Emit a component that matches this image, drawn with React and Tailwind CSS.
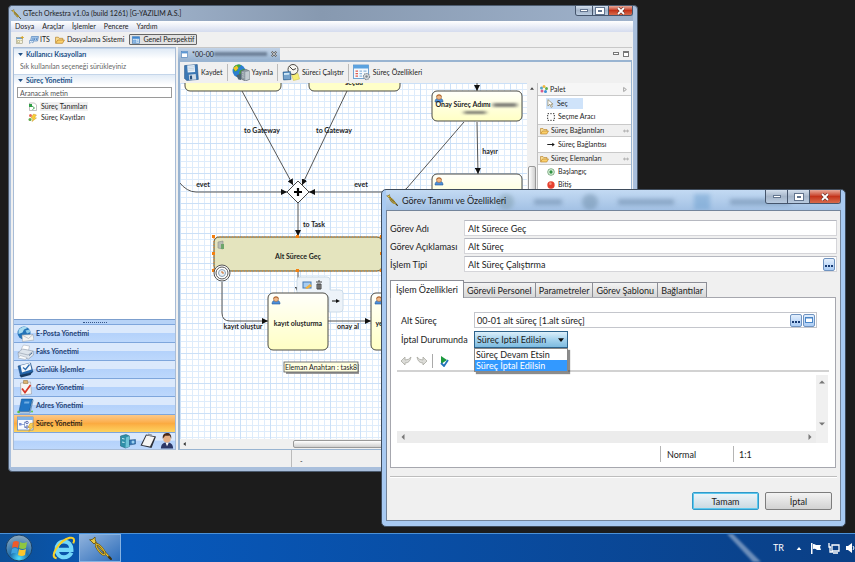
import React, { useState } from "react";
import clsx from "clsx";

/* ---------- small icons ---------- */

function TrumpetIcon({ className }) {
  return (
    <svg viewBox="0 0 24 24" className={className} fill="none" strokeLinecap="round">
      <path d="M5 4l17 18" stroke="#4f3f0c" strokeWidth="2.200" />
      <path d="M5 4l16 17" stroke="#e3c23c" strokeWidth="1.200" />
      <ellipse cx="12.500" cy="13.500" rx="6.500" ry="2" transform="rotate(50 12.5 13.5)" stroke="#5d4a0d" strokeWidth="2" />
      <ellipse cx="12.500" cy="13.500" rx="6.500" ry="2" transform="rotate(50 12.5 13.5)" stroke="#dcb932" strokeWidth="1.200" />
      <path d="M2 4q3 0 5-3 0 3 1 5l-2 2Q4 6 2 4z" fill="#e6c846" stroke="#5d4a0d" strokeWidth=".8" />
      <path d="M21 21l2 2" stroke="#3d3210" strokeWidth="2" />
    </svg>
  );
}

function WindowIcon({ className }) {
  return (
    <svg viewBox="0 0 16 16" className={className}>
      <rect x="1" y="1.5" width="14" height="13" fill="#fff" stroke="#4f81b8" strokeWidth="1.5" />
      <rect x="1" y="1.5" width="14" height="4" fill="#5c98d6" />
    </svg>
  );
}

function PerspectiveIcon({ className }) {
  return (
    <svg viewBox="0 0 16 16" className={className}>
      <rect x="1" y="1.5" width="14" height="13" fill="#d5e7f8" stroke="#4f81b8" strokeWidth="1.5" />
      <rect x="1" y="1.5" width="14" height="4" fill="#3f86d0" />
      <path d="M3 8h5v5H3zM10 8h3M10 11h3" fill="#8cb8e4" stroke="#5c98d6" />
    </svg>
  );
}

function NewWindowIcon({ className }) {
  return (
    <svg viewBox="0 0 16 16" className={className}>
      <rect x="1" y="3" width="12" height="12" fill="#f4f1dc" stroke="#8b8a6a" />
      <rect x="1" y="3" width="12" height="3" fill="#6fa0d5" />
      <path d="M3 9h4v4H3zM9 9h3" stroke="#a39a5f" fill="none" />
      <path d="M12.500 0v6M9.500 3h6" stroke="#d7a526" strokeWidth="2" />
    </svg>
  );
}

function ItsIcon({ className }) {
  return (
    <svg viewBox="0 0 20 16" className={className}>
      <path d="M5 1h14l-2 9H3z" fill="#b9d6f3" stroke="#3e74b2" strokeWidth="1.2" />
      <path d="M8 3v5M12 3l-1 5M16 3l-1 5" stroke="#2a62a8" strokeWidth="1.4" />
      <path d="M1 9h8l-1 5-3-2-4 3z" fill="#e8f2fc" stroke="#3e74b2" />
    </svg>
  );
}

function FolderIcon({ className }) {
  return (
    <svg viewBox="0 0 18 14" className={className}>
      <path d="M1 12V2h5l1.500 2H14v3" fill="#f8dc93" stroke="#b47b1e" strokeWidth="1.200" />
      <path d="M1 13l4-6h12l-3.500 6z" fill="#fbd06c" stroke="#b47b1e" strokeWidth="1.200" />
    </svg>
  );
}

function SaveIcon({ className }) {
  return (
    <svg viewBox="0 0 28 32" className={className}>
      <path d="M1 3l24-2 2 28-22 2-4-4z" fill="#3c78b4" stroke="#1f4d80" />
      <path d="M6 3l14-1 1 13-14 1z" fill="#e9f1f8" />
      <path d="M8 6l11-1M8 9l11-1M8 12l11-1" stroke="#a9bccf" />
      <path d="M9 20l13-1 1 10-13 1z" fill="#cfdae5" />
      <path d="M11 22l4-.5.5 7-4 .5z" fill="#27517f" />
    </svg>
  );
}

function PublishIcon({ className }) {
  return (
    <svg viewBox="0 0 34 32" className={className}>
      <circle cx="13" cy="13" r="12" fill="#2c7fd0" />
      <path d="M3 6c4-6 12-6 14-3l-5 4-2 6-6 1zM15 12l8-3 1 6-7 8-4-5z" fill="#45a93b" />
      <path d="M2 8l7-5 3 5-5 5z" fill="#f2c327" />
      <path d="M17 13l9-3 7 3v16l-8 3-8-4z" fill="#8e9aa3" stroke="#4e5960" />
      <path d="M25 15v16l8-3V13z" fill="#c3ccd2" />
      <path d="M8 21l9-3v12l-5-1z" fill="#4b6472" />
      <path d="M19 16l4 1M19 20l4 1M19 24l4 1" stroke="#e3e9ed" />
    </svg>
  );
}

function RunIcon({ className }) {
  return (
    <svg viewBox="0 0 36 34" className={className}>
      <path d="M19 21l13-2 3 11-12 3z" fill="#f6ee76" stroke="#cbbf46" />
      <circle cx="22" cy="11" r="10" fill="#f7f6f1" stroke="#4e4a45" strokeWidth="2" />
      <path d="M15 5l7 7 6-3" stroke="#2c2a28" strokeWidth="1.800" fill="none" />
      <path d="M2 16l15-1 1 16-15 1z" fill="#4a85bb" stroke="#234f7b" />
      <path d="M4 18l11-.7v4L4 22z" fill="#cfe6f5" />
      <path d="M5 24h2m2 0h2m2 0h2M5 28h2m2 0h2m2 0h2" stroke="#fff" strokeWidth="2" />
    </svg>
  );
}

function PropertiesIcon({ className }) {
  return (
    <svg viewBox="0 0 36 34" className={className}>
      <rect x="1" y="2" width="30" height="27" fill="#f5fafe" stroke="#4888c5" strokeWidth="1.500" />
      <rect x="1" y="2" width="30" height="7" fill="#5ba2df" />
      <path d="M5 14h5M5 19h5M5 24h5" stroke="#e0584b" strokeWidth="2.500" />
      <path d="M13 14h5M13 19h5M13 24h5M21 14h6" stroke="#8db6dc" strokeWidth="2.500" />
      <circle cx="27" cy="25" r="6" fill="#dfe3e7" stroke="#7e8890" strokeWidth="2.500" strokeDasharray="3 1.500" />
      <circle cx="27" cy="25" r="2.500" fill="#7e8890" />
    </svg>
  );
}

function ProcessDefIcon({ className }) {
  return (
    <svg viewBox="0 0 18 18" className={className}>
      <path d="M3 2h10l4 4v11H3z" fill="#fff" stroke="#858585" />
      <path d="M2 4h6v6H2z" fill="#2f9e45" />
      <path d="M8 8l5 4-4 3" stroke="#2f9e45" strokeWidth="1.800" fill="none" />
    </svg>
  );
}

function ProcessLogIcon({ className }) {
  return (
    <svg viewBox="0 0 18 18" className={className}>
      <circle cx="5" cy="5" r="3" fill="#e66a58" />
      <path d="M11 2l6 2-4 5 4 1-9 7 2-6-4-1z" fill="#f9cf35" stroke="#c68a18" strokeWidth=".8" />
      <circle cx="4" cy="13" r="3" fill="#62a84a" />
    </svg>
  );
}

function MailIcon({ className }) {
  return (
    <svg viewBox="0 0 34 32" className={className}>
      <circle cx="14" cy="14" r="13" fill="#2373b8" />
      <path d="M3 9C7 0 18 0 21 4l-7 3-3 6-8 3z" fill="#a9dcf0" />
      <path d="M17 9l8-2 2 5-7 3z" fill="#8fcbe9" />
      <path d="M10 18l22-1 2 11-23 3z" fill="#f4f4f2" stroke="#909aa4" />
      <path d="M10 18l13 7 9-8" fill="none" stroke="#909aa4" />
    </svg>
  );
}

function FaxIcon({ className }) {
  return (
    <svg viewBox="0 0 34 32" className={className}>
      <path d="M8 11L13 2l12 2-2 9z" fill="#fff" stroke="#9aa3ae" />
      <path d="M2 17l9-7 21 4 1 8-10 8-20-5z" fill="#dde4ec" stroke="#7f8b9a" />
      <path d="M2 17l20 5 11-8" fill="none" stroke="#7f8b9a" />
      <path d="M6 23l14 4-3 4-15-3z" fill="#f9fbfd" stroke="#9aa3ae" />
      <path d="M24 23l6-5" stroke="#4f6f95" strokeWidth="2" />
    </svg>
  );
}

function DailyIcon({ className }) {
  return (
    <svg viewBox="0 0 34 32" className={className}>
      <path d="M2 8l25-6 5 18-25 8z" fill="#2566ab" stroke="#163f70" />
      <path d="M7 7l19-5 3 13-19 6z" fill="#f4f8fc" />
      <path d="M12 11l5 4 8-10" fill="none" stroke="#2c6bb0" strokeWidth="2.500" />
      <path d="M5 26l20-4 6-3-4 7-19 5z" fill="#173b63" />
    </svg>
  );
}

function TaskIcon({ className }) {
  return (
    <svg viewBox="0 0 34 32" className={className}>
      <path d="M7 6l20-2 2 24-21 2z" fill="#f7f6f4" stroke="#8d8d90" />
      <path d="M13 1h8l1 6h-9z" fill="#dcb370" stroke="#8f6a32" />
      <path d="M10 17l6 8 11-15" fill="none" stroke="#d8382a" strokeWidth="3.500" />
    </svg>
  );
}

function AddressIcon({ className }) {
  return (
    <svg viewBox="0 0 34 32" className={className}>
      <path d="M9 2h22l-6 25H4z" fill="#2176c5" stroke="#134c87" />
      <path d="M4 27l21 0 6-25 1 3-6 25-21 0z" fill="#e7f0f8" stroke="#134c87" />
      <path d="M15 7h10l-1 4H14z" fill="#71aee3" />
      <circle cx="3" cy="28" r="2.500" fill="#61c43f" />
      <circle cx="30" cy="27" r="2" fill="#61c43f" />
    </svg>
  );
}

function ProcessIcon({ className }) {
  return (
    <svg viewBox="0 0 34 32" className={className}>
      <rect x="1" y="2" width="31" height="26" fill="#f7faff" stroke="#5a87bd" strokeWidth="1.500" />
      <rect x="1" y="2" width="31" height="6" fill="#7fb1e4" />
      <path d="M8 17h7M15 12v11h4M15 12h4" stroke="#3a5fa9" fill="none" />
      <rect x="4" y="14" width="5" height="5" fill="#7a8fd8" />
      <circle cx="20" cy="13" r="2.500" fill="none" stroke="#33479a" strokeWidth="1.500" />
      <circle cx="20" cy="22" r="2.500" fill="none" stroke="#33479a" strokeWidth="1.500" />
      <path d="M26 15l7-1-3 6 3 1-9 10 2-8-4 0z" fill="#f9d257" stroke="#c58c1f" />
    </svg>
  );
}

function CabinetIcon({ className }) {
  return (
    <svg viewBox="0 0 34 32" className={className}>
      <path d="M2 6l11-3 7 3v21l-8 3-10-4z" fill="#2f8fa8" stroke="#17586b" />
      <path d="M13 9l7-3v21l-8 3z" fill="#6fc3d6" />
      <path d="M5 11l5 1M5 18l5 1" stroke="#c7edf5" strokeWidth="2" />
      <path d="M20 14l12-1v9l-12 2z" fill="#3577b5" stroke="#1e4c7c" />
      <circle cx="27" cy="18" r="3" fill="#9cd0ef" />
    </svg>
  );
}

function NotebookIcon({ className }) {
  return (
    <svg viewBox="0 0 34 32" className={className}>
      <path d="M13 3l20 4-9 23L2 25z" fill="#2b2f38" />
      <path d="M14 5l16 3-9 19L5 24z" fill="#f5f5f3" />
      <path d="M17 1l8 2-1 4-8-2z" fill="#8e949c" />
    </svg>
  );
}

function PersonIcon({ className }) {
  return (
    <svg viewBox="0 0 30 34" className={className}>
      <path d="M2 33c0-9 5-13 13-13s13 4 13 13z" fill="#2b3868" />
      <path d="M12 20l3 8 4-8z" fill="#fff" />
      <circle cx="15" cy="12" r="8" fill="#e4ae83" />
      <path d="M6 12C5 2 11 0 16 0s9 4 8 12l-3-6-10 0z" fill="#4c2a18" />
    </svg>
  );
}

function UserGlyph({ x, y }) {
  return (
    <g transform={`translate(${x} ${y})`}>
      <path d="M0 8c0-3 2-4 4-4s4 1 4 4z" fill="#4d8fda" stroke="#1f5596" strokeWidth=".6" />
      <circle cx="4" cy="3" r="2.500" fill="#f0b98a" stroke="#9b5a27" strokeWidth=".5" />
      <path d="M1.500 3C1 0 7 0 6.500 3L5 1.500H3z" fill="#a5541d" />
    </g>
  );
}

/* ---------- window chrome ---------- */

function CaptionButtons({ large }) {
  return (
    <div
      className={clsx(
        "flex shrink-0 self-start rounded-b-[3px] border border-t-0 border-slate-600 overflow-hidden",
        large ? "h-3.5 w-19" : "h-2.5 w-[58px]"
      )}
    >
      <button aria-label="Simge durumuna küçült" className="flex w-5 grow items-center justify-center border-r border-slate-600 bg-linear-to-b from-[#d3dfed] via-[#a5b5c9] to-[#b9cbe0]">
        <span className="h-[3px] w-2 border border-slate-500 bg-white" />
      </button>
      <button aria-label="Ekranı kapla" className="flex w-5 grow items-center justify-center border-r border-slate-600 bg-linear-to-b from-[#d3dfed] via-[#a5b5c9] to-[#b9cbe0]">
        <span className="h-1.5 w-2 border-2 border-white bg-slate-500 outline outline-slate-500" />
      </button>
      <button aria-label="Kapat" className="flex w-7 grow items-center justify-center bg-linear-to-b from-[#e6a99b] via-[#c4331a] to-[#d8694a]">
        <svg viewBox="0 0 10 8" className="h-2 w-2.5">
          <path d="M2 1l6 6M8 1L2 7" stroke="#5b2b27" strokeWidth="3" />
          <path d="M2 1l6 6M8 1L2 7" stroke="#fff" strokeWidth="1.800" />
        </svg>
      </button>
    </div>
  );
}

/* ---------- left side ---------- */

const NAV_ITEMS = [
  { label: "E-Posta Yönetimi", icon: MailIcon },
  { label: "Faks Yönetimi", icon: FaxIcon },
  { label: "Günlük İşlemler", icon: DailyIcon },
  { label: "Görev Yönetimi", icon: TaskIcon },
  { label: "Adres Yönetimi", icon: AddressIcon },
  { label: "Süreç Yönetimi", icon: ProcessIcon },
];

function SectionHeader({ children }) {
  return (
    <h2 className="flex h-[11px] items-center gap-[3px] border-t border-[#c5d6ea] bg-linear-to-b from-[#e1ebf6] to-white px-1 font-bold text-[#215086]">
      <svg viewBox="0 0 8 5" className="h-[3px] w-[5px]">
        <path d="M0 0h8L4 5z" fill="#215086" />
      </svg>
      {children}
    </h2>
  );
}

function Sidebar() {
  const [active, setActive] = useState("Süreç Yönetimi");

  return (
    <aside className="flex w-[163px] shrink-0 flex-col border border-[#a8bcd6] bg-white">
      <SectionHeader>Kullanıcı Kısayolları</SectionHeader>
      <p className="flex h-[15px] items-center px-1.5 text-[#666]">Sık kullanılan seçeneği sürükleyiniz</p>
      <SectionHeader>Süreç Yönetimi</SectionHeader>
      <div className="px-[3px] pt-0.5">
        <input
          aria-label="Aranacak metin"
          placeholder="Aranacak metin"
          className="block h-[11px] w-full border border-[#9a9a9a] px-0.5 placeholder:text-[#555] outline-none"
        />
      </div>
      <ul className="px-3.5 pt-[3px]">
        <li className="flex h-[11px] items-center gap-[3px]">
          <ProcessDefIcon className="size-[9px]" />
          <span className="bg-[#f0f0f0] px-px py-px">Süreç Tanımları</span>
        </li>
        <li className="flex h-[11px] items-center gap-[3px]">
          <ProcessLogIcon className="size-[9px]" />
          <span className="px-px">Süreç Kayıtları</span>
        </li>
      </ul>

      <nav className="mt-auto">
        <div className="flex h-[5px] items-center justify-center border-t border-[#7c9fce] bg-[#b7d3f7]">
          <span className="w-6 border-t border-dotted border-[#35568a]" />
        </div>
        {NAV_ITEMS.map(({ label, icon: Icon }) => (
          <button
            key={label}
            onClick={() => setActive(label)}
            className={clsx(
              "flex h-[18px] w-full items-center gap-0.5 border-t border-[#7ea6dc] bg-linear-to-b px-[3px] text-left font-bold",
              active === label
                ? "from-[#fdc987] via-[#fbab41] to-[#fdd35f] text-[#2b2416]"
                : "from-[#dbe9fc] from-45% via-[#b4d2fb] via-50% to-[#bdd8fc] text-[#1f4175]"
            )}
          >
            <Icon className="h-4 w-[17px] shrink-0" />
            {label}
          </button>
        ))}
        <div className="flex h-[17px] items-center justify-end gap-0.5 border-t border-[#7ea6dc] bg-linear-to-b from-[#dbe9fc] from-45% via-[#b4d2fb] via-50% to-[#bdd8fc]">
          <CabinetIcon className="h-4 w-[18px]" />
          <NotebookIcon className="h-4 w-[18px]" />
          <PersonIcon className="h-4 w-4" />
        </div>
      </nav>
    </aside>
  );
}

/* ---------- process diagram ---------- */

function Node({ x, y, w, h, fill = "url(#nodeFill)" }) {
  return <rect x={x} y={y} width={w} height={h} rx="5" fill={fill} stroke="#4a4a44" />;
}

function Diagram() {
  return (
    <svg className="block h-full w-full" role="img" aria-label="Süreç diyagramı">
      <defs>
        <pattern id="grid" width="6" height="6" patternUnits="userSpaceOnUse">
          <path d="M.5 0v6M0 .5h6" stroke="#deecfb" fill="none" />
        </pattern>
        <pattern id="gridBold" width="30" height="30" patternUnits="userSpaceOnUse">
          <path d="M.5 0v30M0 .5h30" stroke="#cbe0f7" fill="none" />
        </pattern>
        <linearGradient id="nodeFill" x1="0" y1="0" x2="0" y2="1">
          <stop offset="0" stopColor="#fffffb" />
          <stop offset="1" stopColor="#ffffc4" />
        </linearGradient>
        <marker id="arrow" markerUnits="userSpaceOnUse" markerWidth="8" markerHeight="6" refX="6" refY="3" orient="auto">
          <path d="M0 0l6 3-6 3z" fill="#111" />
        </marker>
        <filter id="smudge" x="-50%" y="-50%" width="200%" height="200%">
          <feGaussianBlur stdDeviation="2 1" />
        </filter>
      </defs>
      <rect width="100%" height="100%" fill="#fff" />
      <rect width="100%" height="100%" fill="url(#grid)" />
      <rect width="100%" height="100%" fill="url(#gridBold)" />

      <g transform="translate(-180 -83)">
        {/* connections */}
        <g fill="none" stroke="#555">
          <path d="M242 91L293 185" markerEnd="url(#arrow)" />
          <path d="M347 91L302 185" markerEnd="url(#arrow)" />
          <path d="M179 182q8 10 17 10H287" markerEnd="url(#arrow)" />
          <path d="M464 122L407 188q-3 4-8 4H309" markerEnd="url(#arrow)" />
          <path d="M298 203V236" markerEnd="url(#arrow)" />
          <path d="M477 80V91" markerEnd="url(#arrow)" />
          <path d="M477 122L478 174" markerEnd="url(#arrow)" />
          <path d="M298 270V293" markerEnd="url(#arrow)" />
          <path d="M222 282V313q0 8 8 8H268" markerEnd="url(#arrow)" />
          <path d="M328 321H371" markerEnd="url(#arrow)" />
        </g>

        <Node x="185" y="60" w="96" h="31" fill="#ffffc8" />
        <Node x="309" y="60" w="91" h="31" fill="#ffffc8" />
        <Node x="432" y="91" w="90" h="30" />
        <Node x="432" y="174" w="90" h="34" />
        <Node x="371" y="293" w="60" h="57" />

        <path d="M298 181l11 11-11 11-11-11z" fill="#fff" stroke="#444" />
        <path d="M298 188v8M294 192h8" stroke="#000" strokeWidth="2.200" />

        {/* selected sub process */}
        <rect x="214" y="237" width="168" height="34" rx="5" fill="#e4e4be" stroke="#4a4a30" />
        <rect x="214" y="237" width="168" height="34" fill="none" stroke="#f08a24" strokeDasharray="1 2" />
        <path d="M218 242l5-1v8l-5-1z" fill="#b9bdb5" stroke="#8b8f88" strokeWidth=".6" />
        <path d="M221 244h3v5h-3z" fill="#6da66a" />
        {[[212, 235], [296, 235], [380, 235], [212, 252], [380, 252], [212, 269], [296, 269], [380, 269]].map(([x, y]) => (
          <rect key={`${x}-${y}`} x={x} y={y} width="3" height="3" fill="#f5800f" />
        ))}
        <circle cx="222" cy="273" r="8" fill="#fff" stroke="#555" />
        <circle cx="222" cy="273" r="6" fill="#fff" stroke="#555" />
        <circle cx="222" cy="273" r="3.500" fill="#e9f1f8" stroke="#8da2b6" />
        <path d="M222 271v2h2" stroke="#d0702c" fill="none" />

        {/* hover tools */}
        <path d="M300 277h27q3 0 3 3v10h10q3 0 3 3v16q0 3-3 3h-11v-15h-32v-17q0-3 3-3z" fill="#edf3f9" stroke="#cbdbe9" />
        <rect x="303" y="282" width="8" height="6" fill="#a8cdf0" stroke="#4279b4" />
        <path d="M305 288l5-4 2 2-5 3z" fill="#f2b13c" />
        <path d="M316 282h6M318 281h2M317 284v5h4v-5zM319 284v5" fill="#999" stroke="#444" />
        <path d="M332 301h5" stroke="#111" />
        <path d="M336 299l4 2-4 2z" fill="#111" />
        <Node x="268" y="293" w="60" h="57" />

        <UserGlyph x="435" y="94" />
        <UserGlyph x="435" y="177" />
        <UserGlyph x="272" y="296" />
        <UserGlyph x="375" y="296" />

        <g className="fill-[#222] text-[7px] font-bold" textAnchor="middle">
          <text x="354" y="85">seçuu</text>
          <text x="262" y="133">to Gateway</text>
          <text x="334" y="133">to Gateway</text>
          <text x="203" y="187">evet</text>
          <text x="361" y="187">evet</text>
          <text x="314" y="227">to Task</text>
          <text x="490" y="154">hayır</text>
          <text x="298" y="259">Alt Sürece Geç</text>
          <text x="298" y="326">kayıt oluşturma</text>
          <text x="243" y="329">kayıt oluştur</text>
          <text x="348" y="329">onay al</text>
          <text x="382" y="326">yeni</text>
          <text x="463" y="107">Onay Süreç Adımı</text>
        </g>
        <g filter="url(#smudge)" fill="#555" opacity=".75">
          <rect x="493" y="103" width="24" height="4" />
          <rect x="464" y="111" width="22" height="3" />
        </g>

        {/* tooltip */}
        <rect x="286" y="364" width="73" height="10" fill="#999" />
        <rect x="284" y="362" width="74" height="10" fill="#ffffe1" stroke="#555" strokeWidth=".8" />
        <text x="321" y="370" textAnchor="middle" className="fill-[#222] text-[7px]">
          Eleman Anahtarı : task8
        </text>
      </g>
    </svg>
  );
}

function PaletteHeader({ children }) {
  return (
    <h3 className="flex h-[13px] items-center gap-0.5 border-y border-[#c9c9c9] bg-[#f0f0f0] px-0.5">
      <FolderIcon className="h-2 w-[9px]" />
      <span className="grow">{children}</span>
      <svg viewBox="0 0 12 6" className="h-1 w-1.5">
        <path d="M4 .5L1 3l3 2.500M8 .5L11 3 8 5.500M3 3h6" fill="none" stroke="#666" />
      </svg>
    </h3>
  );
}

function PaletteItem({ icon, selected, children }) {
  return (
    <button className="flex h-[13px] w-full items-center px-2 text-left">
      <span className={clsx("flex h-[11px] items-center gap-[3px] px-px", selected && "w-[37px] bg-[#cfe3fa]")}>
        {icon}
        {children}
      </span>
    </button>
  );
}

function Palette() {
  return (
    <div className="w-[94px] shrink-0 overflow-hidden border-l border-[#c0c0c0] bg-white">
      <div className="flex h-[13px] items-center gap-0.5 border-b border-[#c9c9c9] bg-[#f6f6f6] px-0.5">
        <svg viewBox="0 0 16 16" className="size-2">
          <circle cx="8" cy="3" r="3" fill="#efb73e" />
          <circle cx="13" cy="7" r="3" fill="#5dae4d" />
          <circle cx="11" cy="13" r="3" fill="#3c8ed8" />
          <circle cx="4" cy="12" r="3" fill="#d75c8c" />
          <circle cx="3" cy="6" r="3" fill="#57a7c9" />
        </svg>
        <span className="grow">Palet</span>
        <svg viewBox="0 0 6 8" className="mr-0.5 h-[7px] w-1">
          <path d="M1 1l4 3-4 3z" fill="#fff" stroke="#777" />
        </svg>
      </div>
      <div className="py-px">
        <PaletteItem
          selected
          icon={
            <svg viewBox="0 0 10 14" className="h-[9px] w-[7px]">
              <path d="M1 1v10l3-3 2 5 2-1-2-4h3z" fill="#fff" stroke="#8a7b4e" />
            </svg>
          }
        >
          Seç
        </PaletteItem>
        <PaletteItem
          icon={
            <svg viewBox="0 0 12 12" className="size-2">
              <rect x="1" y="1" width="10" height="10" fill="none" stroke="#333" strokeWidth="1.500" strokeDasharray="2 2" />
            </svg>
          }
        >
          Seçme Aracı
        </PaletteItem>
      </div>
      <PaletteHeader>Süreç Bağlantıları</PaletteHeader>
      <div className="py-px">
        <PaletteItem
          icon={
            <svg viewBox="0 0 12 8" className="h-[5px] w-2">
              <path d="M0 4h9" stroke="#111" strokeWidth="1.500" />
              <path d="M8 1l4 3-4 3z" fill="#111" />
            </svg>
          }
        >
          Süreç Bağlantısı
        </PaletteItem>
      </div>
      <PaletteHeader>Süreç Elemanları</PaletteHeader>
      <PaletteItem
        icon={
          <svg viewBox="0 0 12 12" className="size-2">
            <circle cx="6" cy="6" r="5" fill="#e2f3e2" stroke="#4d8c55" />
            <circle cx="6" cy="6" r="2.500" fill="#2f9141" />
          </svg>
        }
      >
        Başlangıç
      </PaletteItem>
      <PaletteItem
        icon={
          <svg viewBox="0 0 12 12" className="size-2">
            <circle cx="6" cy="6" r="5.500" fill="#e5402f" />
            <circle cx="5" cy="4" r="2" fill="#f58b78" />
          </svg>
        }
      >
        Bitiş
      </PaletteItem>
    </div>
  );
}

const TOOLS = [
  { label: "Kaydet", icon: SaveIcon },
  { label: "Yayınla", icon: PublishIcon },
  { label: "Süreci Çalıştır", icon: RunIcon },
  { label: "Süreç Özellikleri", icon: PropertiesIcon },
];

function Editor() {
  return (
    <section className="flex min-w-0 grow flex-col">
      <div className="flex h-[13px] border-t border-[#c8c8c8]">
        <div className="flex w-[102px] items-center gap-1 bg-linear-to-b from-[#c2d3e7] to-[#99b4d1] px-[3px]">
          <WindowIcon className="size-[7px]" />
          <span>*00-00</span>
          <span className="-ml-1 h-1 grow bg-slate-600/60 blur-[1px]" />
          <button aria-label="Sekmeyi kapat">
            <svg viewBox="0 0 10 10" className="size-1.5">
              <path d="M1 1l8 8M9 1L1 9" stroke="#555" strokeWidth="3" />
              <path d="M1 1l8 8M9 1L1 9" stroke="#fff" />
            </svg>
          </button>
        </div>
        <div className="ml-auto flex items-center gap-1 px-[3px]">
          <span className="mb-0.5 h-[3px] w-1.5 border border-[#777] bg-white" />
          <span className="h-1.5 w-1.5 border border-t-2 border-[#777] bg-white" />
        </div>
      </div>
      <div className="flex min-h-0 grow flex-col border-2 border-r border-b border-[#99b4d1] border-t-[#99b4d1]">
        <div className="flex h-[21px] shrink-0 items-center bg-[#f0f0f0] py-0.5">
          {TOOLS.map(({ label, icon: Icon }, i) => (
            <button
              key={label}
              className={clsx("flex h-full items-center gap-0.5 px-1", i < TOOLS.length - 1 && "border-r border-[#bbb]")}
            >
              <Icon className="h-[17px] w-auto" />
              {label}
            </button>
          ))}
        </div>
        <div className="flex min-h-0 grow">
          <div className="flex min-w-0 grow flex-col">
            <div className="flex min-h-0 grow">
              <div className="min-w-0 grow overflow-hidden">
                <Diagram />
              </div>
              <div className="flex w-2.5 shrink-0 flex-col items-center bg-[#f0f0f0] pt-1">
                <svg viewBox="0 0 8 5" className="h-[3px] w-1">
                  <path d="M4 0l4 5H0z" fill="#444" />
                </svg>
                <span className="mt-19 h-16 w-2 rounded-[2px] border border-[#999] bg-linear-to-r from-white to-[#cfcfcf]" />
              </div>
            </div>
            <div className="flex h-2.5 shrink-0 items-center bg-[#f0f0f0] pl-[3px]">
              <svg viewBox="0 0 5 8" className="h-1 w-[3px]">
                <path d="M0 4l5-4v8z" fill="#333" />
              </svg>
              <span className="ml-[107px] h-2 w-40 rounded-[2px] border border-[#999] bg-linear-to-b from-white to-[#cfcfcf]" />
            </div>
          </div>
          <Palette />
        </div>
      </div>
    </section>
  );
}

function MainWindow() {
  return (
    <div className="absolute top-[5px] right-[217px] bottom-[61px] left-2 flex flex-col rounded-[4px] border border-[#4c5b6e] bg-[#a9bfdc] pr-1 pb-1 pl-0.5 text-[7px] leading-none text-[#1c1c1c]">
      <header className="flex h-[15px] shrink-0 items-center bg-linear-to-r from-[#b1c5df] via-[#8799b0] to-[#9fb2cb]">
        <TrumpetIcon className="size-2.5" />
        <h1 className="ml-0.5 grow">GTech Orkestra v1.0a (build 1261) [G-YAZILIM A.S.]</h1>
        <CaptionButtons />
      </header>

      <div className="flex min-h-0 grow flex-col bg-[#f0f0f0]">
        <div className="flex h-[11px] shrink-0 items-center gap-2 bg-linear-to-b from-white to-[#d5dcee] px-1">
          {["Dosya", "Araçlar", "İşlemler", "Pencere", "Yardım"].map((item) => (
            <button key={item}>{item}</button>
          ))}
        </div>
        <div className="flex h-[15px] shrink-0 items-center gap-[5px] px-[5px]">
          <button aria-label="Yeni perspektif">
            <NewWindowIcon className="size-2" />
          </button>
          <button className="flex items-center gap-px">
            <ItsIcon className="h-2 w-2.5" />
            ITS
          </button>
          <button className="flex items-center gap-0.5">
            <FolderIcon className="h-2 w-2.5" />
            Dosyalama Sistemi
          </button>
          <button className="flex h-[11px] items-center gap-[3px] rounded-[1px] border border-[#666] bg-[#e2e2e2] px-0.5">
            <PerspectiveIcon className="size-2" />
            Genel Perspektif
          </button>
        </div>
        <div className="flex min-h-0 grow gap-0.5 px-0.5 pr-px">
          <Sidebar />
          <Editor />
        </div>
        <footer className="flex h-[17px] shrink-0">
          <span className="ml-[280px] border-l border-[#bbb] pt-2 pl-2">-</span>
        </footer>
      </div>
    </div>
  );
}

/* ---------- task dialog ---------- */

const TABS = ["İşlem Özellikleri", "Görevli Personel", "Parametreler", "Görev Şablonu", "Bağlantılar"];
const CANCEL_OPTIONS = ["Süreç Devam Etsin", "Süreç İptal Edilsin"];

function MoreButton({ label, children }) {
  return (
    <button
      aria-label={label}
      className="flex h-[13px] w-3 shrink-0 items-end justify-center rounded-[2px] border border-[#6f93c0] bg-linear-to-b from-[#e3effd] to-[#a9cbf4] pb-[3px]"
    >
      {children || (
        <svg viewBox="0 0 8 2" className="h-0.5 w-2">
          <path d="M0 0h2v2H0zM3 0h2v2H3zM6 0h2v2H6z" fill="#173a73" />
        </svg>
      )}
    </button>
  );
}

function Field({ id, label, defaultValue, button }) {
  return (
    <div className="flex h-4 items-center">
      <label htmlFor={id} className="w-[74px] shrink-0">
        {label}
      </label>
      <div className="flex h-4 grow items-center border border-[#d5d5d9] border-t-[#b6b8c0] bg-white pr-px">
        <input id={id} defaultValue={defaultValue} className="min-w-0 grow px-[3px] outline-none" />
        {button}
      </div>
    </div>
  );
}

function Arrow({ d, className }) {
  return (
    <svg viewBox="0 0 8 8" className={clsx("size-1.5", className)}>
      <path d={d} fill="#777" />
    </svg>
  );
}

function TaskDialog() {
  const [tab, setTab] = useState(TABS[0]);
  const [onCancel, setOnCancel] = useState(CANCEL_OPTIONS[1]);

  return (
    <div
      role="dialog"
      aria-label="Görev Tanımı ve Özellikleri"
      className="absolute top-[189px] right-[9px] left-[381px] rounded-[5px] border border-[#3f4c5c] bg-[#a8caf2] px-1 pb-[5px] text-[9px] leading-none text-[#1c1c1c]"
    >
      <header className="relative flex h-5 items-center overflow-hidden bg-linear-to-b from-[#c3daf3] to-[#a3c1e4]">
        <div aria-hidden="true" className="absolute top-1 left-28 flex items-center gap-5 opacity-50 blur-[2px]">
          <span className="size-4 rounded-full bg-[#7e9cac]" />
          <span className="h-1.5 w-7 bg-[#6684a4]" />
          <span className="size-4 rounded-full bg-[#6d8ca8]" />
          <span className="h-1.5 w-14 bg-[#6684a4]" />
          <span className="size-4 bg-[#6da0cf]" />
          <span className="h-1.5 w-15 bg-[#6684a4]" />
        </div>
        <TrumpetIcon className="relative size-3" />
        <h2 className="relative ml-1 grow">Görev Tanımı ve Özellikleri</h2>
        <div className="relative flex self-start">
          <CaptionButtons large />
        </div>
      </header>

      <div className="border border-[#74859b] bg-[#f0f0f0] px-[3px] pt-[9px] pb-2.5">
        <form onSubmit={(e) => e.preventDefault()}>
          <div className="flex flex-col gap-[2px]">
            <Field id="taskName" label="Görev Adı" defaultValue="Alt Sürece Geç" />
            <Field id="taskInfo" label="Görev Açıklaması" defaultValue="Alt Süreç" />
            <Field
              id="taskType"
              label="İşlem Tipi"
              defaultValue="Alt Süreç Çalıştırma"
              button={<MoreButton label="İşlem tipi seç" />}
            />
          </div>

          <div role="tablist" className="mt-2 flex items-end">
            {TABS.map((name) => (
              <button
                key={name}
                type="button"
                role="tab"
                aria-selected={tab === name}
                onClick={() => setTab(name)}
                className={clsx(
                  "border border-b-0 border-[#8c8e96]",
                  tab === name
                    ? "z-10 -mb-px h-[18px] bg-white px-[5px]"
                    : "h-[15px] border-l-0 bg-linear-to-b from-[#f3f3f3] to-[#d6d6d6] px-[3px]"
                )}
              >
                {name}
              </button>
            ))}
          </div>

          <div className="mr-px border border-[#a6a7ae] bg-white px-1.5 pt-[14px] pb-[5px]">
            <div className="flex h-4 items-center pr-3 pl-1">
              <label htmlFor="subProcess" className="w-[73px] shrink-0">
                Alt Süreç
              </label>
              <div className="flex h-4 grow items-center gap-px border border-[#c4c6cc] bg-white pr-px">
                <input id="subProcess" defaultValue="00-01 alt süreç [1.alt süreç]" className="min-w-0 grow px-0.5 outline-none" />
                <MoreButton label="Alt süreç seç" />
                <MoreButton label="Alt süreci aç">
                  <svg viewBox="0 0 8 6" className="h-1.5 w-2">
                    <rect x=".5" y=".5" width="7" height="5" fill="#fff" stroke="#4a86c7" />
                    <path d="M0 1h8" stroke="#4a86c7" />
                  </svg>
                </MoreButton>
              </div>
            </div>

            <div className="mt-0.5 flex h-[18px] items-center pl-1">
              <label htmlFor="onCancel" className="w-[73px] shrink-0">
                İptal Durumunda
              </label>
              <div className="relative">
                <select
                  id="onCancel"
                  value={onCancel}
                  onChange={(e) => setOnCancel(e.target.value)}
                  className="block h-[17px] w-[94px] appearance-none border border-[#2c628b] bg-linear-to-b from-[#dceffa] via-[#a5d3ee] to-[#7dbbe0] px-0.5 outline-none"
                >
                  {CANCEL_OPTIONS.map((option) => (
                    <option key={option}>{option}</option>
                  ))}
                </select>
                <svg viewBox="0 0 8 5" className="pointer-events-none absolute top-[7px] right-1 h-1 w-1.5">
                  <path d="M0 0h8L4 5z" fill="#111" />
                </svg>
                {/* open option list */}
                <ul
                  role="listbox"
                  aria-label="İptal Durumunda"
                  className="absolute top-full left-0 z-20 w-full border border-[#888] bg-white shadow-[2px_2px_1px_rgba(0,0,0,0.45)]"
                >
                  {CANCEL_OPTIONS.map((option) => (
                    <li
                      key={option}
                      role="option"
                      aria-selected={option === onCancel}
                      onClick={() => setOnCancel(option)}
                      className={clsx("flex h-[11px] items-center px-px whitespace-nowrap", option === onCancel && "bg-[#3399ff] text-white")}
                    >
                      {option}
                    </li>
                  ))}
                </ul>
              </div>
            </div>

            <div className="flex h-6 items-center gap-1 border-b-2 border-[#d2d2d2] px-[3px] pt-1">
              <button type="button" aria-label="Geri al">
                <svg viewBox="0 0 12 12" className="size-3">
                  <path d="M5 2L1 6l4 4V8q5 0 6-6Q9 5 5 5z" fill="#dcdcd8" stroke="#aaa9a2" strokeWidth=".8" />
                </svg>
              </button>
              <button type="button" aria-label="Yinele">
                <svg viewBox="0 0 12 12" className="size-3">
                  <path d="M7 2l4 4-4 4V8Q2 8 1 2q2 3 6 3z" fill="#dcdcd8" stroke="#aaa9a2" strokeWidth=".8" />
                </svg>
              </button>
              <span className="h-3.5 border-l border-[#aaa]" />
              <button type="button" aria-label="Doğrula" className="ml-0.5">
                <svg viewBox="0 0 10 12" className="h-3 w-2.5">
                  <path d="M2 1l6 4-6 4z" fill="#1c9a3e" />
                  <path d="M2 8l3 3 4-6" fill="none" stroke="#2273b9" strokeWidth="1.800" />
                </svg>
              </button>
            </div>

            <div className="mt-[3px] mr-px grid grid-cols-[1fr_12px] grid-rows-[56px_12px]">
              <textarea aria-label="Betik" className="resize-none outline-none" />
              <div className="flex flex-col items-center justify-between bg-[#f0f0f0] py-1">
                <Arrow d="M4 2l4 4H0z" />
                <Arrow d="M0 2h8L4 6z" />
              </div>
              <div className="flex items-center justify-between bg-[#ececec] px-[3px]">
                <Arrow d="M6 0v8L2 4z" />
                <Arrow d="M2 0l4 4-4 4z" />
              </div>
              <div className="bg-[#f0f0f0]" />
            </div>

            <div className="mt-[3px] flex h-4 justify-end">
              <span className="flex w-[73px] items-center border-l border-[#b5b5b5] pl-1.5">Normal</span>
              <span className="flex w-24 items-center border-l border-[#b5b5b5] pl-[5px]">1:1</span>
            </div>
          </div>

          <hr className="mt-2 border-t border-b border-t-[#bdbdbd] border-b-white" />

          <div className="mt-[14px] flex justify-end gap-1.5 pr-[5px]">
            <button
              type="submit"
              className="h-[18px] w-[67px] rounded-[2px] border border-[#3199c9] bg-linear-to-b from-[#eef6fa] to-[#c9d8e1] inset-ring inset-ring-[#5cc8ee]"
            >
              Tamam
            </button>
            <button
              type="button"
              className="h-[18px] w-[67px] rounded-[2px] border border-[#7d7d7d] bg-linear-to-b from-[#f3f3f3] to-[#d2d2d2]"
            >
              İptal
            </button>
          </div>
        </form>
      </div>
    </div>
  );
}

/* ---------- taskbar ---------- */

function Taskbar() {
  return (
    <footer className="relative flex h-[29px] shrink-0 items-center overflow-hidden border-t border-[#4c92d8] bg-linear-to-r from-[#0c4f97] via-[#0759bc] via-15% to-[#0a3f85] text-[9px] text-white">
      <svg viewBox="0 0 70 28" className="absolute top-0 right-18 h-full w-[70px] blur-[1px]">
        <path d="M14 0h6l28 28H40z" fill="#fff" opacity=".4" />
      </svg>
      <button aria-label="Başlat" className="ml-[5px]">
        <svg viewBox="0 0 28 28" className="size-7">
          <defs>
            <radialGradient id="orb" cx=".5" cy=".9" r=".9">
              <stop offset="0" stopColor="#4fe0ff" />
              <stop offset=".4" stopColor="#1e6fae" />
              <stop offset="1" stopColor="#8fa9bd" />
            </radialGradient>
          </defs>
          <circle cx="14" cy="14" r="13" fill="url(#orb)" stroke="#174069" />
          <path d="M8 8q3-2 6 0l-1 6q-3-2-6 0z" fill="#ef5a2a" />
          <path d="M15 8q3 2 7 0l-1 6q-3 2-7 0z" fill="#8fc63f" />
          <path d="M7 15q3-2 6 0l-1 5q-3-2-6 0z" fill="#3fa4e0" />
          <path d="M14 15q3 2 7 0l-1 6q-3 2-7 0z" fill="#fcc52c" />
        </svg>
      </button>
      <button aria-label="Internet Explorer" className="ml-[19px]">
        <svg viewBox="0 0 26 26" className="size-6" fill="none">
          <path d="M21 18c-2 4-5 5-8 5-5 0-8-4-8-8.500S8 6 13 6s8 4 8 9H7" stroke="#74d8fa" strokeWidth="4.500" />
          <path d="M5 24C-4 23 8 5 19 2c5-1 6 2 4 6" stroke="#f8d028" strokeWidth="2.200" />
        </svg>
      </button>
      <button aria-label="GTech Orkestra" className="ml-[3px] flex h-full w-[42px] items-center justify-center border border-[#86b3e3] bg-linear-to-br from-[#8fb2dc] to-[#2a6dba]">
        <TrumpetIcon className="size-6" />
      </button>
      <div className="ml-auto flex items-center gap-1.5">
        <span className="mr-1.5">TR</span>
        <svg viewBox="0 0 8 5" className="mr-0.5 h-[3px] w-1.5">
          <path d="M4 0l4 5H0z" fill="#fff" />
        </svg>
        <svg viewBox="0 0 12 12" className="size-3" fill="#fff">
          <path d="M1 1h1.500v11H1zM3 2q2 0 3 1h5l-1 2 1 3H7Q5 6 3 7z" />
        </svg>
        <svg viewBox="0 0 12 12" className="size-3" fill="none" stroke="#fff" strokeWidth="1.300">
          <path d="M4 3h7v6H4zM5 11h5M1 1v4h2M2 5v5h3" />
        </svg>
        <svg viewBox="0 0 9 12" className="h-3 w-[9px]" fill="#fff">
          <path d="M0 4h2l4-3v10L2 8H0z" />
          <path d="M7 4q2 2 0 4" fill="none" stroke="#fff" />
        </svg>
      </div>
    </footer>
  );
}

export default function App() {
  return (
    <div className="flex h-screen flex-col overflow-hidden bg-[#1c1c1c] font-['Lato',sans-serif]">
      <main className="relative grow">
        <MainWindow />
        <TaskDialog />
      </main>
      <Taskbar />
    </div>
  );
}
